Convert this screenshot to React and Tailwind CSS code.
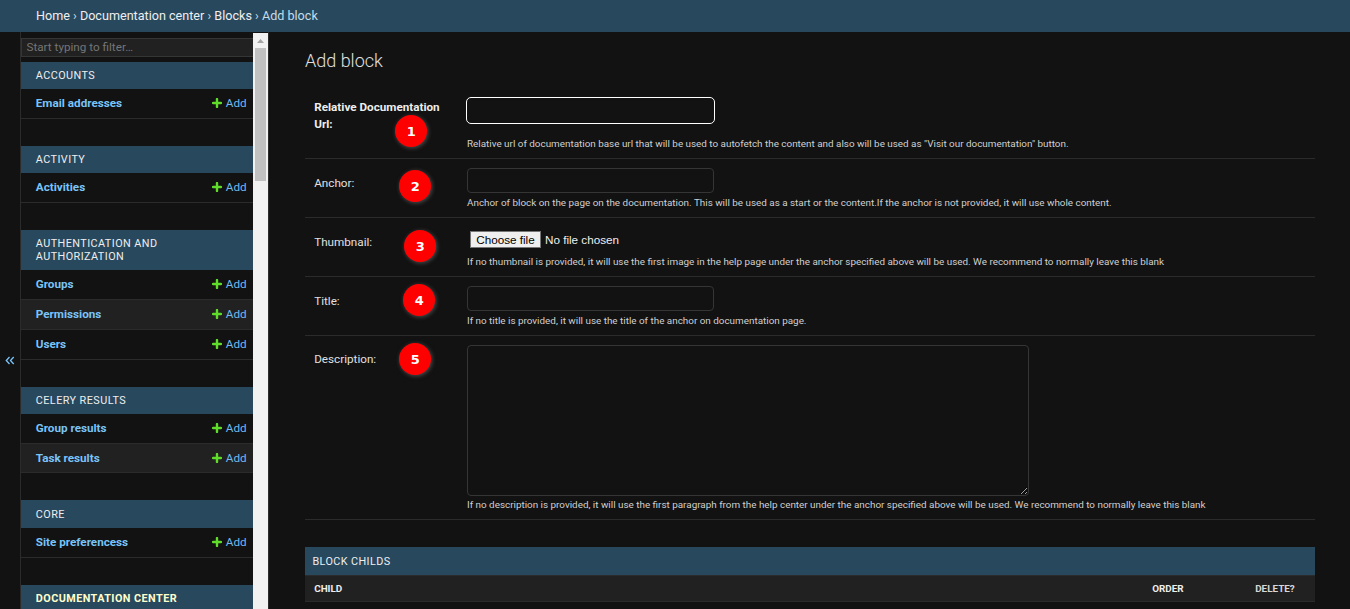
import React from "react";

const sections = [
  { title: "Accounts", head: "h-[27px]", items: [["Email addresses", "h-[30px]"]] },
  { title: "Activity", head: "h-[27px]", items: [["Activities", "h-[30px]"]] },
  {
    title: "Authentication and Authorization",
    head: "h-[40px]",
    items: [["Groups", "h-[30px]"], ["Permissions", "h-[30px]"], ["Users", "h-[30px]"]],
  },
  { title: "Celery Results", head: "h-[27px]", items: [["Group results", "h-[30px]"], ["Task results", "h-[29px]"]] },
  { title: "Core", head: "h-[28px]", items: [["Site preferencess", "h-[30px]"]] },
  { title: "Documentation Center", head: "h-[27px]", current: true, items: [] },
];

function PlusIcon() {
  return (
    <svg width="10" height="10" viewBox="0 0 10 10" className="mr-[4px] mb-px shrink-0">
      <path d="M5 1v8M1 5h8" stroke="#5fdd2a" strokeWidth="2.4" strokeLinecap="round" fill="none" />
    </svg>
  );
}

function Sidebar() {
  return (
    <nav className="flex w-[232px] shrink-0 flex-col overflow-hidden pt-[6px]">
      <input
        placeholder="Start typing to filter…"
        className="mb-[5px] h-[19px] w-[240px] shrink-0 border border-[#353535] bg-[#212121] px-[4.5px] pb-[2px] text-[11.7px] text-[#eeeeee] outline-none placeholder:text-[#757575]"
      />
      {sections.map((s) => (
        <div key={s.title} className="mb-[27px] shrink-0">
          <div
            className={`flex items-center bg-[#28485e] pl-[14.8px] pr-[60px] text-[10.8px] leading-[13px] tracking-[0.45px] uppercase ${s.head} ${
              s.current ? "font-bold text-[#ffffcc]" : "text-[#eeeeee]"
            }`}
          >
            <span className={s.current ? "whitespace-nowrap" : ""}>{s.title}</span>
          </div>
          {s.items.map(([name, height], i) => (
            <div
              key={name}
              className={`flex items-center justify-between border-b border-[#2b2b2b] pl-[14.8px] pr-[6.4px] text-[11.7px] leading-[15px] ${height} ${
                i % 2 ? "bg-[#212121]" : ""
              }`}
            >
              <span className="font-bold text-[#79c4f8]">{name}</span>
              <span className="flex items-center text-[#6fb9ee]">
                <PlusIcon />
                Add
              </span>
            </div>
          ))}
        </div>
      ))}
    </nav>
  );
}

function Scrollbar() {
  return (
    <div className="mt-px flex w-[15px] shrink-0 flex-col items-center bg-[#f1f1f1]">
      <svg width="15" height="15" viewBox="0 0 15 15" className="shrink-0">
        <path d="M4 10h7L7.5 6z" fill="#a3a3a3" />
      </svg>
      <div className="h-[133px] w-[11px] bg-[#c1c1c1]" />
    </div>
  );
}

function Row({ label, bold, height, labelTop, children, help, helpTop }) {
  return (
    <div className={`flex border-b border-[#2b2b2b] pl-[9.2px] ${height}`}>
      <div className={`w-[152.8px] shrink-0 pr-[20px] text-[11.7px] leading-[17px] ${labelTop} ${bold ? "font-bold text-[#eeeeee]" : "text-[#e0e0e0]"}`}>
        {label}
      </div>
      <div className="flex flex-col">
        {children}
        <div className={`whitespace-nowrap text-[9.9px] leading-[14px] text-[#d0d0d0] ${helpTop}`}>{help}</div>
      </div>
    </div>
  );
}

function Badge({ n, place }) {
  return (
    <div
      className={`absolute flex size-[32px] items-center justify-center rounded-full bg-[#ff0000] pt-px font-['DejaVu_Sans',sans-serif] text-[13px] leading-none font-bold text-white shadow-[1px_1px_4px_rgba(130,130,130,0.55)] ${place}`}
    >
      {n}
    </div>
  );
}

const inputClass = "block w-[247px] shrink-0 rounded-[4px] border border-[#353535] bg-[#121212] outline-none";

export default function App() {
  return (
    <div className="relative flex h-[609px] w-[1350px] flex-col overflow-hidden bg-[#121212] font-['Roboto',sans-serif] text-[#eeeeee]">
      <header className="flex h-[32px] shrink-0 items-center bg-[#28485e] pl-[36px] text-[12.6px] text-[#c4dce8]">
        <span className="whitespace-pre">
          <span className="text-[#eeeeee]">Home</span> › <span className="text-[#eeeeee]">Documentation center</span> ›{" "}
          <span className="text-[#eeeeee]">Blocks</span> › Add block
        </span>
      </header>
      <div className="flex min-h-0 flex-1">
        <button className="flex w-[21px] shrink-0 items-center justify-center border-r border-[#2b2b2b] pr-px pt-[79px]">
          <svg width="10" height="9" viewBox="0 0 10 9" fill="none" stroke="#79c4f8" strokeWidth="1.3">
            <path d="M4.5 1L1.3 4.5l3.2 3.5M8.7 1L5.5 4.5l3.2 3.5" />
          </svg>
        </button>
        <Sidebar />
        <Scrollbar />
        <main className="flex min-w-0 flex-1 flex-col border-l border-[#2b2b2b] pl-[36px] pr-[35px]">
          <h1 className="h-[56px] shrink-0 pt-[18px] text-[18px] leading-[22px] font-light text-[#e0e0e0]">Add block</h1>
          <Row label="Relative Documentation Url:" bold height="h-[71px]" labelTop="pt-[11px]" helpTop="mt-[13px]"
            help={'Relative url of documentation base url that will be used to autofetch the content and also will be used as "Visit our documentation" button.'}>
            <input className="-ml-px mt-[9px] block h-[27px] w-[249px] shrink-0 rounded-[5px] border border-white bg-[#121212] outline-none" />
          </Row>
          <Row label="Anchor:" height="h-[59px]" labelTop="pt-[16px]" helpTop="mt-[3px]"
            help="Anchor of block on the page on the documentation. This will be used as a start or the content.If the anchor is not provided, it will use whole content.">
            <input className={`${inputClass} mt-[9px] h-[25px]`} />
          </Row>
          <Row label="Thumbnail:" height="h-[59px]" labelTop="pt-[16px]" helpTop="mt-[7px]"
            help="If no thumbnail is provided, it will use the first image in the help page under the anchor specified above will be used. We recommend to normally leave this blank">
            <div className="mt-[13px] flex h-[17px] shrink-0 items-center pl-[3px] font-['Liberation_Sans',sans-serif] text-[11.7px]">
              <button className="flex h-[17px] w-[71px] items-center justify-center border border-[#767676] bg-[#efefef] text-black">
                Choose file
              </button>
              <span className="ml-[4px]">No file chosen</span>
            </div>
          </Row>
          <Row label="Title:" height="h-[59px]" labelTop="pt-[16px]" helpTop="mt-[3px]"
            help="If no title is provided, it will use the title of the anchor on documentation page.">
            <input className={`${inputClass} mt-[9px] h-[25px]`} />
          </Row>
          <Row label="Description:" height="h-[184px]" labelTop="pt-[15px]" helpTop="mt-[2px]"
            help="If no description is provided, it will use the first paragraph from the help center under the anchor specified above will be used. We recommend to normally leave this blank">
            <textarea className="mt-[9px] block h-[151px] w-[562px] shrink-0 resize rounded-[4px] border border-[#353535] bg-[#121212] outline-none" />
          </Row>
          <h2 className="mt-[27px] flex h-[28px] shrink-0 items-center bg-[#28485e] pt-[2px] pl-[7.4px] text-[10.8px] leading-[14px] tracking-[0.42px] text-[#eeeeee] uppercase">
            Block childs
          </h2>
          <div className="flex h-[27px] shrink-0 items-center border-y border-[#2b2b2b] bg-[#212121] pt-[2px] pl-[9.2px] text-[9.9px] font-bold uppercase">
            <span className="w-[838px]">Child</span>
            <span className="w-[103px]">Order</span>
            <span className="text-[#d8d8d8]">Delete?</span>
          </div>
        </main>
      </div>
      <Badge n="1" place="left-[395.4px] top-[115px]" />
      <Badge n="2" place="left-[399.4px] top-[170px]" />
      <Badge n="3" place="left-[404.4px] top-[230px]" />
      <Badge n="4" place="left-[403.4px] top-[284px]" />
      <Badge n="5" place="left-[399.4px] top-[343px]" />
    </div>
  );
}
